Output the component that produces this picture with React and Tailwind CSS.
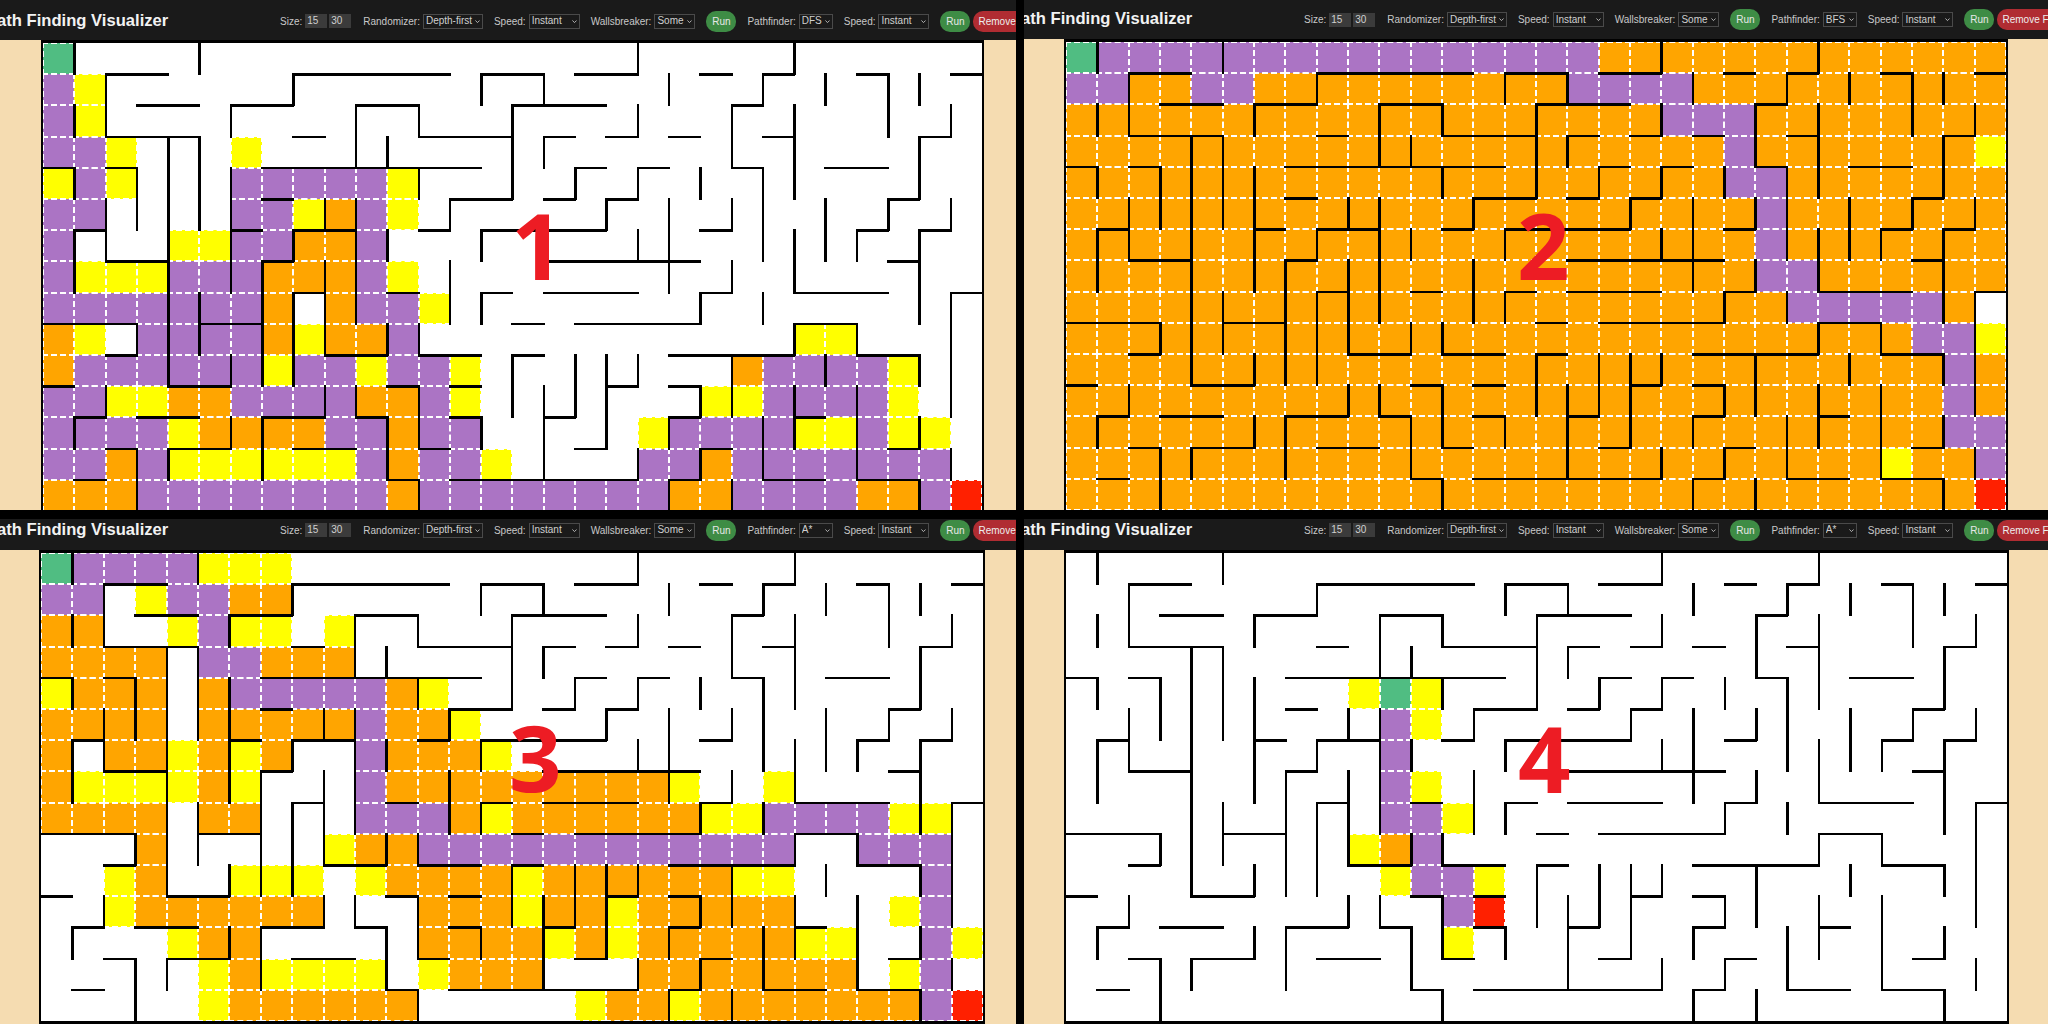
const H = {
  1: [2, 3, 8, 9, 10, 11, 12, 14, 15, 17, 18, 21, 23, 26, 29],
  2: [3, 4, 6, 7, 10, 11, 15, 16, 17, 22],
  3: [2, 3, 4, 8, 12, 13, 14, 16, 18, 20, 23, 28],
  4: [0, 2, 7, 8, 9, 10, 11, 12, 13, 17, 19, 22, 25, 26],
  5: [7, 13, 14, 16, 18, 27],
  6: [1, 6, 8, 9, 12, 14, 15, 16, 17, 21, 26, 28],
  7: [2, 3, 7, 16, 17, 18, 19, 20, 27],
  8: [8, 11, 14, 16, 17, 18, 21, 24, 25, 26, 29],
  9: [0, 1, 2, 5, 6, 15, 17, 18, 19, 20, 24, 25],
  10: [2, 9, 10, 12, 13, 15, 20, 21, 22, 23, 26, 27],
  11: [0, 4, 5, 11, 13, 18, 20],
  12: [1, 3, 4, 7, 8, 10, 13, 16, 20, 24],
  13: [2, 4, 5, 8, 9, 12, 17, 21, 27],
  14: [1, 11, 13, 14, 15, 16, 17, 18, 20, 23, 24, 26, 27],
};
const V = {
  1: [0, 2, 4, 6, 7, 12],
  2: [1, 2, 5, 6, 11],
  3: [4, 5, 9, 13, 14],
  4: [3, 4, 5, 6, 7, 8, 9, 10, 13],
  5: [0, 3, 4, 5, 8, 9],
  6: [2, 4, 5, 6, 7, 10, 12],
  7: [7, 8, 9, 10, 12, 13],
  8: [1, 6, 8, 9, 10],
  9: [5, 7, 8, 9, 11],
  10: [2, 3, 5, 6, 7, 8, 11],
  11: [3, 6, 9, 12, 13],
  12: [2, 4, 9, 11, 12, 14],
  13: [5, 7, 8],
  14: [1, 6, 8, 12],
  15: [2, 3, 4, 10, 11],
  16: [1, 3, 11, 12, 13],
  17: [4, 10, 11],
  18: [5, 10, 11, 12],
  19: [0, 2, 4, 6, 10, 13],
  20: [1, 5, 6, 7, 12, 14],
  21: [4, 8, 11, 13],
  22: [2, 3, 5, 7, 10, 11, 14],
  23: [1, 4, 5, 6, 8, 12, 13],
  24: [0, 2, 3, 4, 6, 7, 9, 11, 12],
  25: [1, 5, 6, 10],
  26: [6, 9, 11, 12, 13],
  27: [1, 2, 5],
  28: [1, 3, 4, 6, 7, 8, 10, 12, 14],
  29: [2, 5, 8, 9, 10, 11, 13],
};

const FILL = {
  p: "bg-[#ab74c4]",
  o: "bg-[#ffa500]",
  y: "bg-[#ffff00]",
  s: "bg-[#50bd82]",
  e: "bg-[#ff2000]",
};

const decode = (rle) => {
  let out = "";
  for (const m of rle.matchAll(/([.poyse])(\d+)/g)) out += m[1].repeat(Number(m[2]));
  return out.padEnd(30, ".");
};

const P1 = [
  "s1.29", "p1y1.28", "p1y1.28", "p2y1.3y1.23", "y1p1y1.3p5y1.18",
  "p2.4p2y1o1p1y1", "p1.3y2p2o2p1", "p1y3p3o3p1y1", "p7o1.1o1p2y1",
  "o1y1.1p4o1y1o2p1.12y2", "o1p6y1p2y1p2y1.8o1p4y1", "p2y2o2p4o2p1y1.7y2p4y1",
  "p4y1o4p2o1p2.5y1p4y2p1y2", "p2o1p1y6p1o1p2y1.4p2o1p7", "o3p8o1p8o2p4o2p1e1",
];
const P2 = [
  "s1p16o13", "p2o2p2o10p4o10", "o19p3o8", "o21p1o7y1", "o21p2o7", "o22p1o7", "o22p1o7",
  "o22p2o6", "o23p5o1.1", "o27p2y1", "o28p1o1", "o28p1o1", "o28p2", "o26y1o2p1", "o29e1",
];
const P3 = [
  "s1p4y3.22", "p2.1y1p2o2.22", "o2.2y1p1y2.1y1.20", "o4.1p2o3.20", "y1o3.1o1p5o1y1.17",
  "o4.1o5p1o2y1.16", "o1.1o2y1o1y1o1.2p1o3y1.15", "o1y4o1y1.3p1o9y1.2y1.6",
  "o4.1o2.3p3o1y1o6y2p4y2.1", ".3o1.5y1o2p12.2p3.1", ".2y1o1.2y3.1y1o4y1o6y2.4p1.1",
  ".2y1o6.3o3y1o2y1o5.3y1p1.1", ".4y1o2.5o4y1o1y1o5y2.2p1y1",
  ".5y1o1y4.1y1o3.3o7.1y1p1.1", ".5y1o6.5y1o2y1o7p1e1",
];
const P4 = [
  ".30", ".30", ".30", ".30", ".9y1s1y1", ".10p1y1", ".10p1", ".10p1y1", ".10p2y1",
  ".9y1o1p1", ".10y1p2y1", ".12p1e1", ".12y1", ".30", ".30",
];

function Maze({ rows, className }) {
  const cells = [];
  rows.forEach((rle, r) => {
    const line = decode(rle);
    for (let c = 0; c < 30; c++) {
      const kind = line[c];
      cells.push(
        <div key={`${r}-${c}`} className="relative min-w-0 min-h-0 bg-white">
          {kind !== "." && <div className={`absolute inset-0 z-[1] ${FILL[kind]}`} />}
          {kind !== "." && (
            <div className="absolute -inset-px z-[2] border-2 border-dashed border-white" />
          )}
          {H[r]?.includes(c) && (
            <span className="absolute left-[-1px] right-[-1px] top-[-1px] h-[2.5px] bg-black z-10" />
          )}
          {V[c]?.includes(r) && (
            <span className="absolute top-[-1px] bottom-[-1px] left-[-1px] w-[2.5px] bg-black z-10" />
          )}
        </div>
      );
    }
  });
  return (
    <div
      className={`grid grid-cols-[repeat(30,minmax(0,1fr))] grid-rows-[repeat(15,minmax(0,1fr))] border-t-[3px] border-x-2 border-b-[3px] border-black shrink-0 box-border overflow-hidden ${className}`}
    >
      {cells}
    </div>
  );
}

function Select({ value, className }) {
  return (
    <div className={`relative h-[15px] shrink-0 ${className}`}>
      <select
        className="block appearance-none w-full h-full text-[10px] leading-none bg-[#1a1a1a] text-[#d0d0d0] border border-[#4a4a4a] rounded-none pl-[2px] pr-0 font-['Liberation_Sans',sans-serif]"
        defaultValue={value}
      >
        <option value={value}>{value}</option>
      </select>
      <svg
        viewBox="0 0 6 4"
        className="absolute right-[3px] top-[6px] w-[5px] h-[3.5px] pointer-events-none"
        fill="none"
        stroke="#d0d0d0"
        strokeWidth="1"
      >
        <path d="M0.5 0.5 L3 3 L5.5 0.5" />
      </svg>
    </div>
  );
}

function Field({ label, children }) {
  return (
    <div className="flex items-center gap-[3px] shrink-0">
      <span className="text-[10px] text-[#c8c8c8] whitespace-nowrap">{label}</span>
      {children}
    </div>
  );
}

function Header({ finder, className }) {
  return (
    <header className={`flex items-center bg-[#1a1a1a] shrink-0 overflow-hidden ${className}`}>
      <h1 className="ml-[-14px] w-[184px] shrink-0 text-[16.6px] font-bold text-[#f2f2f2] whitespace-nowrap">
        Path Finding Visualizer
      </h1>
      <div className="ml-[110px] flex items-center gap-[11px] shrink-0">
        <div className="flex items-center gap-[2px] shrink-0 mr-px">
          <span className="text-[10px] text-[#c8c8c8] mr-px">Size:</span>
          <div className="w-[22px] h-[14px] bg-[#3b3b3b] text-[10px] leading-[14px] text-[#d0d0d0] pl-[2px]">15</div>
          <div className="w-[22px] h-[14px] bg-[#3b3b3b] text-[10px] leading-[14px] text-[#d0d0d0] pl-[2px]">30</div>
        </div>
        <Field label="Randomizer:">
          <Select value="Depth-first" className="w-[60px]" />
        </Field>
        <Field label="Speed:">
          <Select value="Instant" className="w-[51px]" />
        </Field>
        <Field label="Wallsbreaker:">
          <Select value="Some" className="w-[41px]" />
        </Field>
        <button className="w-[30px] h-[21px] rounded-[10px] bg-[#3e8c45] text-[10px] text-[#e8e8e8]">Run</button>
        <Field label="Pathfinder:">
          <Select value={finder} className="w-[34px]" />
        </Field>
        <Field label="Speed:">
          <Select value="Instant" className="w-[51px]" />
        </Field>
        <div className="flex items-center gap-[3px] shrink-0">
          <button className="w-[30px] h-[21px] rounded-[10px] bg-[#3e8c45] text-[10px] text-[#e8e8e8]">Run</button>
          <button className="w-[76px] h-[21px] rounded-[10px] bg-[#b02c32] text-[10px] text-[#eeeeee] text-left pl-[5px] whitespace-nowrap shrink-0">
            Remove Fill
          </button>
        </div>
      </div>
    </header>
  );
}

function Panel({ finder, rows, label, labelClass, headerClass, bodyClass, mazeClass }) {
  return (
    <section className="relative flex flex-col overflow-hidden min-w-0 min-h-0">
      <Header finder={finder} className={headerClass} />
      <div className={`flex flex-1 min-h-0 items-start bg-[#f5dcb1] ${bodyClass}`}>
        <Maze rows={rows} className={mazeClass} />
      </div>
      <span
        className={`absolute z-20 text-[92px] leading-none font-bold text-[#ed1c24] font-['Open_Sans',sans-serif] ${labelClass}`}
      >
        {label}
      </span>
    </section>
  );
}

export default function App() {
  return (
    <div className="w-[2048px] h-[1024px] overflow-hidden bg-black grid grid-cols-[1016px_1024px] grid-rows-[510px_505px] gap-x-[8px] gap-y-[9px] font-['Liberation_Sans',sans-serif]">
      <Panel
        finder="DFS"
        rows={P1}
        label="1"
        labelClass="left-[511px] top-[199px]"
        headerClass="h-[40px] pt-[2px]"
        bodyClass="pl-[41px]"
        mazeClass="w-[943px] h-[474px]"
      />
      <Panel
        finder="BFS"
        rows={P2}
        label="2"
        labelClass="left-[493px] top-[199px]"
        headerClass="h-[39px]"
        bodyClass="pl-[40px]"
        mazeClass="w-[944px] h-[474px]"
      />
      <Panel
        finder="A*"
        rows={P3}
        label="3"
        labelClass="left-[509px] top-[192px]"
        headerClass="h-[31px] pb-[9px]"
        bodyClass="pl-[39px]"
        mazeClass="w-[946px] h-[474px]"
      />
      <Panel
        finder="A*"
        rows={P4}
        label="4"
        labelClass="left-[494px] top-[193px]"
        headerClass="h-[31px] pb-[9px]"
        bodyClass="pl-[40px]"
        mazeClass="w-[945px] h-[474px]"
      />
    </div>
  );
}
